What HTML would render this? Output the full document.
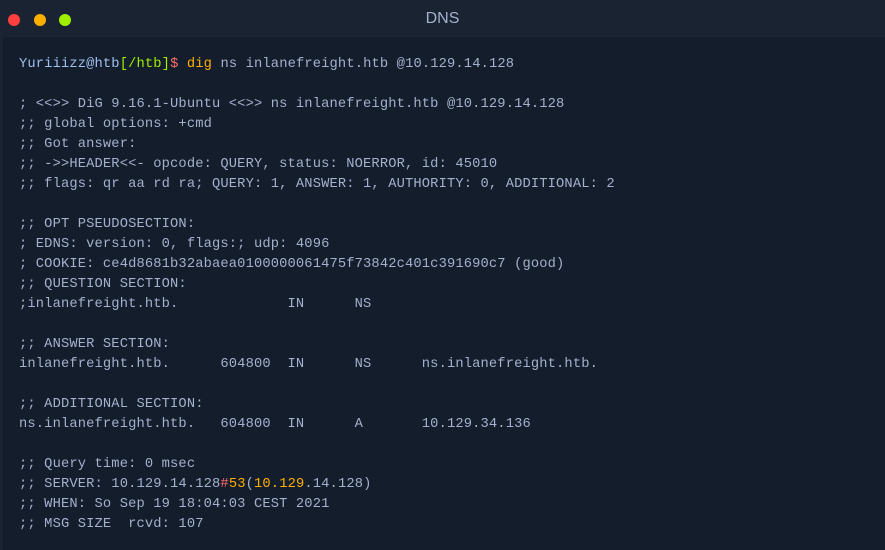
<!DOCTYPE html>
<html><head><meta charset="utf-8"><style>
html,body{margin:0;padding:0;width:885px;height:550px;overflow:hidden;background:#1a2332;}
.bar{position:absolute;left:0;top:0;width:885px;height:37px;background:#1a2332;}
.dot{position:absolute;top:14px;width:12px;height:12px;border-radius:50%;}
.title{position:absolute;left:0;width:885px;top:10px;text-align:center;color:#a4b1cd;font:16px "Liberation Sans",sans-serif;}
.body{position:absolute;left:3px;top:37px;width:882px;height:513px;background:#141d2b;}
pre{position:absolute;left:16px;top:18px;margin:0;font:13.75px/20px "Liberation Mono",monospace;letter-spacing:0.14px;color:#a4b1cd;}
.u{color:#9fbfef}.g{color:#9fef00}.r{color:#ff6b6b}.o{color:#ffaf00}
</style></head><body>
<div class="bar">
<div class="dot" style="left:8px;background:#ff3e3e"></div>
<div class="dot" style="left:34px;background:#ffaf00"></div>
<div class="dot" style="left:59px;background:#9fef00"></div>
<div class="title">DNS</div>
</div>
<div class="body"><pre><span class="u">Yuriiizz@htb</span><span class="g">[/htb]</span><span class="r">$</span> <span class="o">dig</span> ns inlanefreight.htb @10.129.14.128

; &lt;&lt;&gt;&gt; DiG 9.16.1-Ubuntu &lt;&lt;&gt;&gt; ns inlanefreight.htb @10.129.14.128
;; global options: +cmd
;; Got answer:
;; -&gt;&gt;HEADER&lt;&lt;- opcode: QUERY, status: NOERROR, id: 45010
;; flags: qr aa rd ra; QUERY: 1, ANSWER: 1, AUTHORITY: 0, ADDITIONAL: 2

;; OPT PSEUDOSECTION:
; EDNS: version: 0, flags:; udp: 4096
; COOKIE: ce4d8681b32abaea0100000061475f73842c401c391690c7 (good)
;; QUESTION SECTION:
;inlanefreight.htb.             IN      NS

;; ANSWER SECTION:
inlanefreight.htb.      604800  IN      NS      ns.inlanefreight.htb.

;; ADDITIONAL SECTION:
ns.inlanefreight.htb.   604800  IN      A       10.129.34.136

;; Query time: 0 msec
;; SERVER: 10.129.14.128<span class="r">#</span><span class="o">53</span>(<span class="o">10.129</span>.14.128)
;; WHEN: So Sep 19 18:04:03 CEST 2021
;; MSG SIZE  rcvd: 107</pre></div>
</body></html>
